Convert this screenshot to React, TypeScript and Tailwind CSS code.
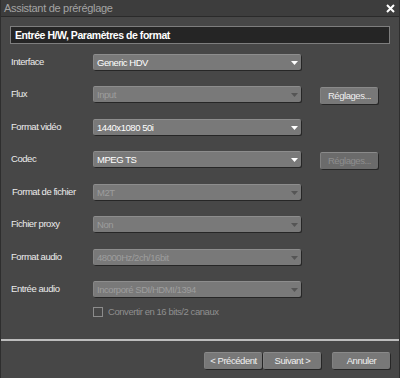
import React from "react";

type Row = {
  label: string;
  value: string;
  enabled: boolean;
  tall: boolean;
  button?: "on" | "off";
  indent?: boolean;
};

const rows: Row[] = [
  { label: "Interface", value: "Generic HDV", enabled: true, tall: false },
  { label: "Flux", value: "Input", enabled: false, tall: true, button: "on" },
  { label: "Format vidéo", value: "1440x1080 50i", enabled: true, tall: false },
  { label: "Codec", value: "MPEG TS", enabled: true, tall: true, button: "off" },
  { label: "Format de fichier", value: "M2T", enabled: false, tall: false, indent: true },
  { label: "Fichier proxy", value: "Non", enabled: false, tall: true },
  { label: "Format audio", value: "48000Hz/2ch/16bit", enabled: false, tall: false },
  { label: "Entrée audio", value: "Incorporé SDI/HDMI/1394", enabled: false, tall: false },
];

const Arrow = ({ enabled }: { enabled: boolean }) => (
  <svg width="7" height="4" viewBox="0 0 7 4" className="shrink-0">
    <path d="M0 0H7L3.5 4Z" fill={enabled ? "#ffffff" : "#555555"} />
  </svg>
);

const Dropdown = ({ value, enabled }: { value: string; enabled: boolean }) => (
  <div className="flex h-[16px] w-[208px] items-center justify-between rounded-[2px] border-t border-l border-t-[#8d8d8d] border-l-[#858585] bg-[#797979] pl-[3px] pr-[3px] shadow-[1px_1px_0_#262626]">
    <span className={enabled ? "text-white" : "text-[#9d9d9d]"}>{value}</span>
    <Arrow enabled={enabled} />
  </div>
);

const Btn = ({
  label,
  enabled = true,
  width = "w-[58px]",
}: {
  label: string;
  enabled?: boolean;
  width?: string;
}) => (
  <div
    className={`flex h-[17px] items-center justify-center rounded-[2px] border-t border-l border-t-[#8a8a8a] border-l-[#828282] shadow-[1px_1px_0_#262626] ${width} ${
      enabled ? "bg-[#787878] text-[#f0f0f0]" : "bg-[#6b6b6b] text-[#8e8e8e]"
    }`}
  >
    {label}
  </div>
);

export default function App() {
  return (
    <div className="flex h-[378px] w-[400px] flex-col border-x border-[#2e2e2e] bg-[#474747] font-['Liberation_Sans',Arial,sans-serif] text-[9.5px] leading-none tracking-[-0.45px]">
      <div className="flex h-[17px] shrink-0 items-center justify-between border-b border-[#2a2a2a] bg-[#3d3d3d] pl-[3px] pr-[3px]">
        <span className="text-[11px] tracking-[-0.3px] text-[#a4a4a4]">Assistant de préréglage</span>
        <svg width="9" height="9" viewBox="0 0 9 9" className="mr-[1px]">
          <path d="M1 1L8 8M8 1L1 8" stroke="#ffffff" strokeWidth="2" />
        </svg>
      </div>

      <div className="flex flex-1 flex-col px-[9px]">
        <div className="mt-[9px] flex h-[18px] items-center border border-[#7e7e7e] bg-[#252525] pl-[4px] text-[10.5px] font-bold text-white">
          Entrée H/W, Paramètres de format
        </div>

        <div className="mt-[10px] flex flex-col">
          {rows.map((r) => (
            <div key={r.label} className={`flex items-start ${r.tall ? "h-[33px]" : "h-[32px]"}`}>
              <div
                className={`flex h-[16px] w-[83px] items-center text-[#ececec] ${
                  r.indent ? "pl-[2px]" : "pl-[1px]"
                }`}
              >
                {r.label}
              </div>
              <Dropdown value={r.value} enabled={r.enabled} />
              {r.button && (
                <div className="ml-[19px] mt-[1px]">
                  <Btn label="Réglages..." enabled={r.button === "on"} />
                </div>
              )}
            </div>
          ))}
        </div>

        <div className="-mt-[6px] ml-[83px] flex items-center gap-[5px] text-[#8f8f8f]">
          <div className="h-[10px] w-[10px] border border-[#8c8c8c]" />
          <span>Convertir en 16 bits/2 canaux</span>
        </div>
      </div>

      <div className="h-[2px] shrink-0 bg-[#bdbdbd]" />

      <div className="flex h-[37px] shrink-0 items-start justify-end pr-[9px] pt-[11px]">
        <Btn label="< Précédent" />
        <div className="ml-[1px]">
          <Btn label="Suivant >" />
        </div>
        <div className="ml-[11px]">
          <Btn label="Annuler" />
        </div>
      </div>
    </div>
  );
}
